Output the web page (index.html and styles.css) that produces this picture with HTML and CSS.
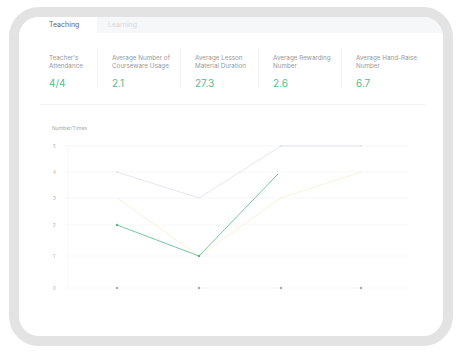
FILE: index.html
```html
<!DOCTYPE html>
<html lang="en">

<head>
    <meta charset="UTF-8">
    <meta name="viewport" content="width=device-width, initial-scale=1.0">
    <title>Teaching</title>
    <link rel="stylesheet" href="styles.css">
</head>

<body>
    <div class="frame">
        <div class="tabs">
            <div class="tab active">Teaching</div>
            <div class="tab">Learning</div>
        </div>
        <!-- 统计 -->
        <div class="stats">
            <div class="stat first">
                <div class="label">Teacher's<br>Attendance</div>
                <div class="value">4/4</div>
            </div>
            <div class="stat w83">
                <div class="label">Average Number of<br>Courseware Usage</div>
                <div class="value">2.1</div>
            </div>
            <div class="stat w78">
                <div class="label">Average Lesson<br>Material Duration</div>
                <div class="value">27.3</div>
            </div>
            <div class="stat w83">
                <div class="label">Average Rewarding<br>Number</div>
                <div class="value">2.6</div>
            </div>
            <div class="stat">
                <div class="label">Average Hand-Raise<br>Number</div>
                <div class="value">6.7</div>
            </div>
        </div>
        <div class="divider"></div>
        <!-- 图表 -->
        <svg class="chart" width="424" height="226" viewBox="19 110 424 226">
            <text x="52" y="130" class="unit">Number/Times</text>
            <g class="grid">
                <line x1="64" y1="146" x2="408" y2="146"/>
                <line x1="64" y1="172" x2="408" y2="172"/>
                <line x1="64" y1="198" x2="408" y2="198"/>
                <line x1="64" y1="225" x2="408" y2="225"/>
                <line x1="64" y1="256" x2="408" y2="256"/>
                <line x1="64" y1="288" x2="408" y2="288"/>
                <line x1="68" y1="146" x2="68" y2="288"/>
            </g>
            <g class="ylabels">
                <text x="53" y="147.5">5</text>
                <text x="53" y="173.5">4</text>
                <text x="53" y="199.5">3</text>
                <text x="53" y="226.5">2</text>
                <text x="53" y="257.5">1</text>
                <text x="53" y="289.5">0</text>
            </g>
            <polyline class="line purple" points="117,172 199,198 281,146 361,146"/>
            <polyline class="line yellow" points="117,198 199,256 281,198 361,172"/>
            <polyline class="line green" points="117,225 199,256 278,174"/>
            <circle cx="117" cy="225" r="1.2" fill="#52b78c"/>
            <circle cx="199" cy="256" r="1.2" fill="#52b78c"/>
            <circle cx="117" cy="172" r="1" fill="#dde0f2"/>
            <circle cx="281" cy="146" r="1" fill="#dde0f2"/>
            <circle cx="361" cy="146" r="1" fill="#dde0f2"/>
            <g class="ticks">
                <circle cx="117" cy="288" r="1.2"/>
                <circle cx="199" cy="288" r="1.2"/>
                <circle cx="281" cy="288" r="1.2"/>
                <circle cx="361" cy="288" r="1.2"/>
            </g>
        </svg>
    </div>
</body>

</html>
```

FILE: styles.css
```css
* {
    box-sizing: border-box;
    padding: 0;
    margin: 0;
}

body {
    background: #fff;
    font-family: Inter, "Liberation Sans", sans-serif;
}

.frame {
    margin: 7px 8px 0 9px;
    height: 339px;
    border: 10px solid #e3e3e3;
    border-radius: 30px;
    overflow: hidden;
    background: #fff;
}

/* 标签 */

.tabs {
    display: flex;
    height: 16px;
}

.tab {
    font-size: 7px;
    line-height: 16px;
    color: #d8d8d8;
    background: #f6f7f8;
    flex: 1;
    padding-left: 11px;
}

.tab.active {
    flex: 0 0 78px;
    background: #fff;
    color: #666;
    padding-left: 30px;
}

/* 统计 */

.stats {
    display: flex;
    padding: 15px 0 0 30px;
}

.stat {
    height: 40px;
    padding: 6px 0 0 14px;
    border-left: 1px solid #f4f4f4;
    flex: 1;
}

.stat.first {
    flex: 0 0 48px;
    padding-left: 0;
    border-left: none;
}

.stat.w83 {
    flex: 0 0 83px;
}

.stat.w78 {
    flex: 0 0 78px;
}

.label {
    font-size: 6.3px;
    line-height: 8px;
    color: #999;
    white-space: nowrap;
}

.value {
    margin-top: 7px;
    font-size: 10px;
    line-height: 12px;
    color: #5cb892;
}

.divider {
    margin: 16px 0 0 21px;
    width: 385px;
    height: 1px;
    background: #f3f3f3;
}

/* 图表 */

.chart {
    display: block;
    margin-top: 5px;
}

.unit {
    font-size: 5px;
    fill: #aaa;
}

.grid line {
    stroke: #f5f5f5;
    stroke-width: 0.8;
}

.ylabels text {
    font-size: 4.5px;
    fill: #aaa;
}

.line {
    fill: none;
    stroke-width: 0.8;
}

.purple {
    stroke: #dde0f2;
}

.yellow {
    stroke: #f7efcc;
}

.green {
    stroke: #52b78c;
}

.ticks circle {
    fill: #aaa;
}
```
